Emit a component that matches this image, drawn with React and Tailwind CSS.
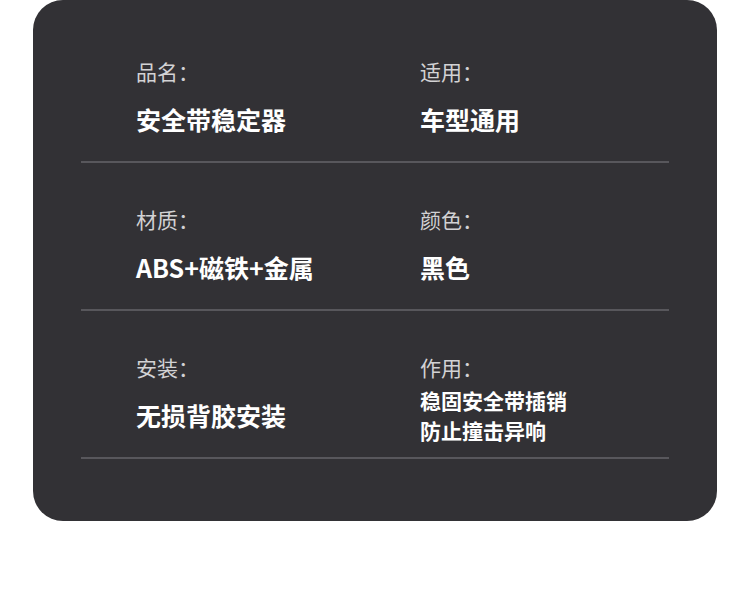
const rows = [
  [
    { label: '品名：', value: ['安全带稳定器'] },
    { label: '适用：', value: ['车型通用'] }
  ],
  [
    { label: '材质：', value: ['ABS+磁铁+金属'] },
    { label: '颜色：', value: ['黑色'] }
  ],
  [
    { label: '安装：', value: ['无损背胶安装'] },
    { label: '作用：', value: ['稳固安全带插销', '防止撞击异响'], small: true }
  ]
]

function Cell({ label, value, small }) {
  return (
    <div>
      <div className="text-[21px] leading-[26px] text-[#d2d2d4]">{label}</div>
      <div className="mt-[5px] h-[60px] flex flex-col justify-center">
        {value.map((line) => (
          <div
            key={line}
            className={
              small
                ? 'text-[21px] leading-[30px] font-bold text-white'
                : 'text-[25px] leading-[32px] font-bold text-white'
            }
          >
            {line}
          </div>
        ))}
      </div>
    </div>
  )
}

export default function App() {
  return (
    <div
      className="bg-white w-[750px] h-[589px] px-[33px]"
      style={{ fontFamily: '"Noto Sans CJK SC", "Noto Sans", sans-serif' }}
    >
      <div className="bg-[#323135] rounded-[30px] pt-[15px] pb-[62px] px-[48px]">
        {rows.map((row, i) => (
          <div
            key={i}
            className="grid grid-cols-[284px_1fr] pl-[55px] pt-[43px] pb-[12px] border-b-2 border-[#58575c]"
          >
            {row.map((cell) => (
              <Cell key={cell.label} {...cell} />
            ))}
          </div>
        ))}
      </div>
    </div>
  )
}
